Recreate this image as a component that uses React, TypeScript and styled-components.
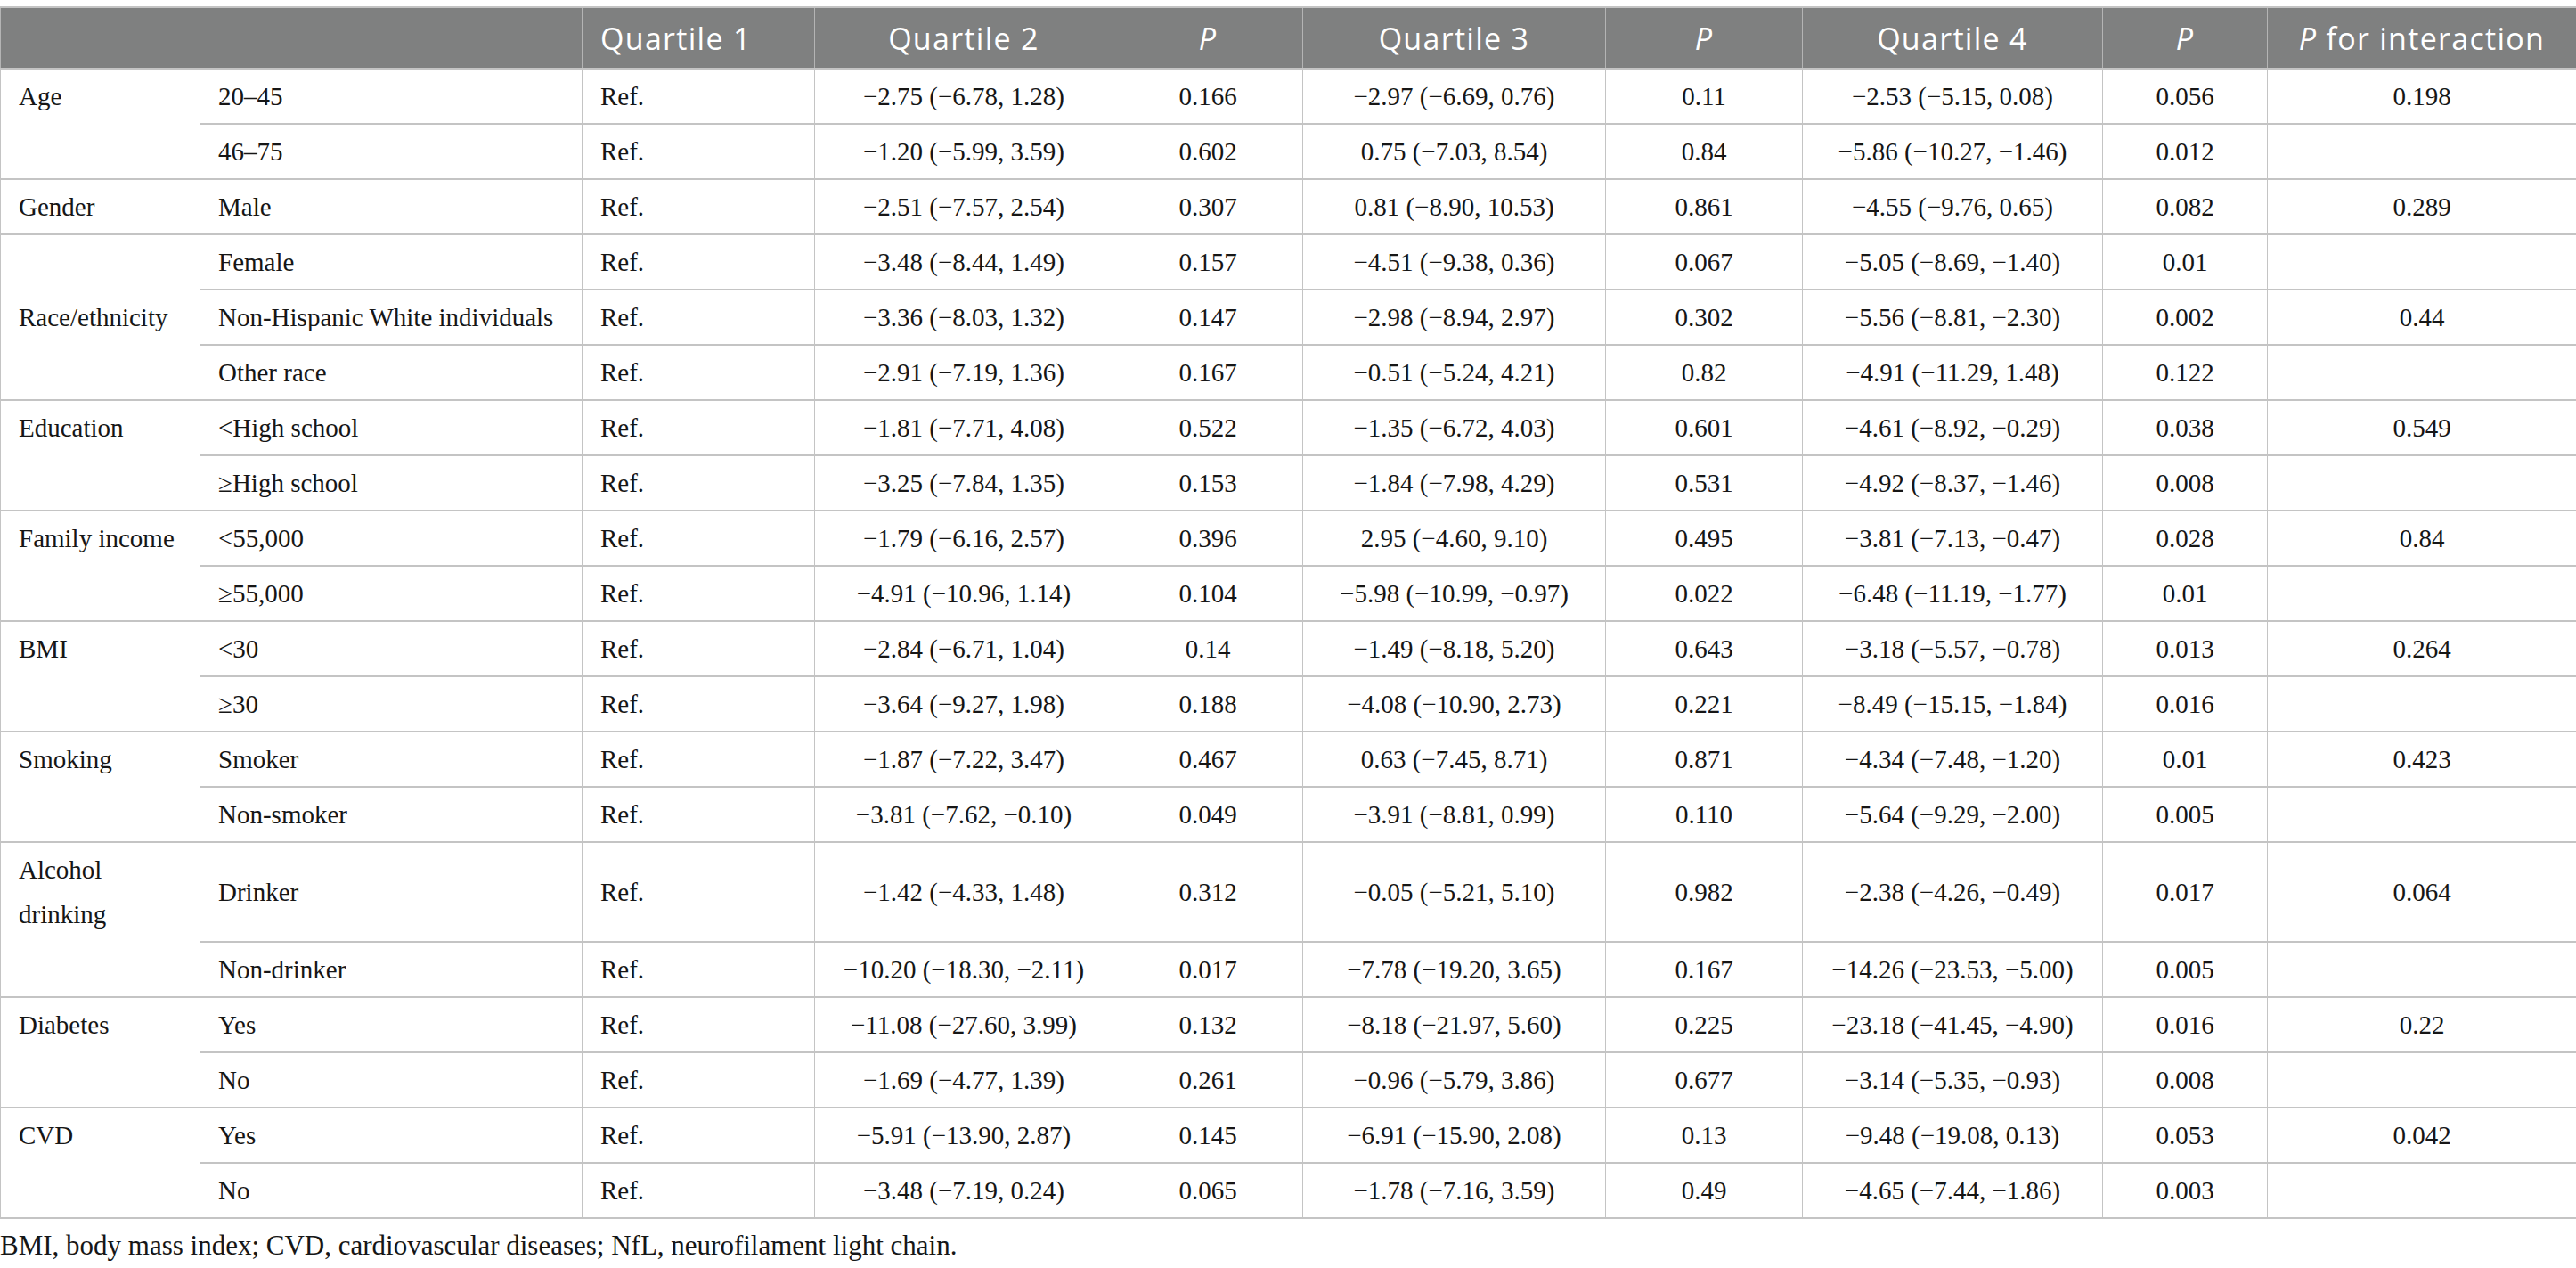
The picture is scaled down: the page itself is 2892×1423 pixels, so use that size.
import React from 'react';
import styled, { createGlobalStyle } from 'styled-components';

type DataRow = string[];

interface Group {
  label: string;
  middle?: boolean;
  tallFirst?: boolean;
  rows: DataRow[];
}

const groups: Group[] = [
  {
    label: 'Age',
    rows: [
      ['20–45', '−2.75 (−6.78, 1.28)', '0.166', '−2.97 (−6.69, 0.76)', '0.11', '−2.53 (−5.15, 0.08)', '0.056', '0.198'],
      ['46–75', '−1.20 (−5.99, 3.59)', '0.602', '0.75 (−7.03, 8.54)', '0.84', '−5.86 (−10.27, −1.46)', '0.012', ''],
    ],
  },
  {
    label: 'Gender',
    rows: [
      ['Male', '−2.51 (−7.57, 2.54)', '0.307', '0.81 (−8.90, 10.53)', '0.861', '−4.55 (−9.76, 0.65)', '0.082', '0.289'],
    ],
  },
  {
    label: 'Race/ethnicity',
    middle: true,
    rows: [
      ['Female', '−3.48 (−8.44, 1.49)', '0.157', '−4.51 (−9.38, 0.36)', '0.067', '−5.05 (−8.69, −1.40)', '0.01', ''],
      ['Non-Hispanic White individuals', '−3.36 (−8.03, 1.32)', '0.147', '−2.98 (−8.94, 2.97)', '0.302', '−5.56 (−8.81, −2.30)', '0.002', '0.44'],
      ['Other race', '−2.91 (−7.19, 1.36)', '0.167', '−0.51 (−5.24, 4.21)', '0.82', '−4.91 (−11.29, 1.48)', '0.122', ''],
    ],
  },
  {
    label: 'Education',
    rows: [
      ['<High school', '−1.81 (−7.71, 4.08)', '0.522', '−1.35 (−6.72, 4.03)', '0.601', '−4.61 (−8.92, −0.29)', '0.038', '0.549'],
      ['≥High school', '−3.25 (−7.84, 1.35)', '0.153', '−1.84 (−7.98, 4.29)', '0.531', '−4.92 (−8.37, −1.46)', '0.008', ''],
    ],
  },
  {
    label: 'Family income',
    rows: [
      ['<55,000', '−1.79 (−6.16, 2.57)', '0.396', '2.95 (−4.60, 9.10)', '0.495', '−3.81 (−7.13, −0.47)', '0.028', '0.84'],
      ['≥55,000', '−4.91 (−10.96, 1.14)', '0.104', '−5.98 (−10.99, −0.97)', '0.022', '−6.48 (−11.19, −1.77)', '0.01', ''],
    ],
  },
  {
    label: 'BMI',
    rows: [
      ['<30', '−2.84 (−6.71, 1.04)', '0.14', '−1.49 (−8.18, 5.20)', '0.643', '−3.18 (−5.57, −0.78)', '0.013', '0.264'],
      ['≥30', '−3.64 (−9.27, 1.98)', '0.188', '−4.08 (−10.90, 2.73)', '0.221', '−8.49 (−15.15, −1.84)', '0.016', ''],
    ],
  },
  {
    label: 'Smoking',
    rows: [
      ['Smoker', '−1.87 (−7.22, 3.47)', '0.467', '0.63 (−7.45, 8.71)', '0.871', '−4.34 (−7.48, −1.20)', '0.01', '0.423'],
      ['Non-smoker', '−3.81 (−7.62, −0.10)', '0.049', '−3.91 (−8.81, 0.99)', '0.110', '−5.64 (−9.29, −2.00)', '0.005', ''],
    ],
  },
  {
    label: 'Alcohol drinking',
    tallFirst: true,
    rows: [
      ['Drinker', '−1.42 (−4.33, 1.48)', '0.312', '−0.05 (−5.21, 5.10)', '0.982', '−2.38 (−4.26, −0.49)', '0.017', '0.064'],
      ['Non-drinker', '−10.20 (−18.30, −2.11)', '0.017', '−7.78 (−19.20, 3.65)', '0.167', '−14.26 (−23.53, −5.00)', '0.005', ''],
    ],
  },
  {
    label: 'Diabetes',
    rows: [
      ['Yes', '−11.08 (−27.60, 3.99)', '0.132', '−8.18 (−21.97, 5.60)', '0.225', '−23.18 (−41.45, −4.90)', '0.016', '0.22'],
      ['No', '−1.69 (−4.77, 1.39)', '0.261', '−0.96 (−5.79, 3.86)', '0.677', '−3.14 (−5.35, −0.93)', '0.008', ''],
    ],
  },
  {
    label: 'CVD',
    rows: [
      ['Yes', '−5.91 (−13.90, 2.87)', '0.145', '−6.91 (−15.90, 2.08)', '0.13', '−9.48 (−19.08, 0.13)', '0.053', '0.042'],
      ['No', '−3.48 (−7.19, 0.24)', '0.065', '−1.78 (−7.16, 3.59)', '0.49', '−4.65 (−7.44, −1.86)', '0.003', ''],
    ],
  },
];

const colWidths = [224, 429, 261, 335, 213, 340, 221, 337, 185, 347];

const App: React.FC = () => {
  return (
    <Page>
      <GlobalStyle />
      <Table>
        <colgroup>
          {colWidths.map((w, i) => (
            <col key={i} style={{ width: w }} />
          ))}
        </colgroup>
        <thead>
          <tr>
            <HeadCell />
            <HeadCell />
            <HeadCell $left>Quartile 1</HeadCell>
            <HeadCell>Quartile 2</HeadCell>
            <HeadCell><em>P</em></HeadCell>
            <HeadCell>Quartile 3</HeadCell>
            <HeadCell><em>P</em></HeadCell>
            <HeadCell>Quartile 4</HeadCell>
            <HeadCell><em>P</em></HeadCell>
            <HeadCell><em>P</em> for interaction</HeadCell>
          </tr>
        </thead>
        <tbody>
          {groups.map((group) =>
            group.rows.map((row, i) => (
              <Row key={group.label + row[0]} $tall={group.tallFirst && i === 0}>
                {i === 0 && (
                  <GroupCell rowSpan={group.rows.length} $middle={group.middle}>
                    {group.label}
                  </GroupCell>
                )}
                <TextCell>{row[0]}</TextCell>
                <TextCell>Ref.</TextCell>
                {row.slice(1).map((value, j) => (
                  <NumCell key={j}>{value}</NumCell>
                ))}
              </Row>
            ))
          )}
        </tbody>
      </Table>
      <Footnote>
        BMI, body mass index; CVD, cardiovascular diseases; NfL, neurofilament light chain.
      </Footnote>
    </Page>
  );
};

const GlobalStyle = createGlobalStyle`
  html, body {
    margin: 0;
    padding: 0;
    background: #ffffff;
  }
`;

const Page = styled.div`
  padding-top: 7px;
  width: 2892px;
  font-family: 'Liberation Serif', 'Times New Roman', serif;
  color: #161616;
`;

const Table = styled.table`
  width: 2892px;
  table-layout: fixed;
  border-collapse: collapse;
  border-top: 2px solid #c4c4c4;
  border-bottom: 2px solid #c4c4c4;
  border-left: 1px solid #c4c4c4;
  border-right: 1px solid #c4c4c4;
`;

const HeadCell = styled.th<{ $left?: boolean }>`
  background: #7f8080;
  color: #ffffff;
  font-family: 'Open Sans', 'Noto Sans', sans-serif;
  font-weight: 400;
  font-size: 34px;
  letter-spacing: 1.3px;
  line-height: 50px;
  height: 67px;
  padding: 0 20px;
  text-align: ${({ $left }) => ($left ? 'left' : 'center')};
  vertical-align: middle;
  border-left: 1px solid #b4b4b4;
  border-right: 1px solid #b4b4b4;
  white-space: nowrap;

  em {
    font-style: italic;
  }
`;

const Row = styled.tr<{ $tall?: boolean }>`
  height: ${({ $tall }) => ($tall ? '112px' : '62px')};
`;

const Cell = styled.td`
  font-size: 29px;
  line-height: 50px;
  padding: 5px 20px;
  border-top: 2px solid #c4c4c4;
  border-bottom: 2px solid #c4c4c4;
  border-left: 1px solid #c4c4c4;
  border-right: 1px solid #c4c4c4;
  white-space: nowrap;
`;

const GroupCell = styled(Cell)<{ $middle?: boolean }>`
  vertical-align: ${({ $middle }) => ($middle ? 'middle' : 'top')};
  white-space: normal;
`;

const TextCell = styled(Cell)`
  text-align: left;
  vertical-align: middle;
`;

const NumCell = styled(Cell)`
  text-align: center;
  vertical-align: middle;
`;

const Footnote = styled.p`
  margin: 5px 0 0;
  font-size: 31px;
  line-height: 50px;
  color: #161616;
`;

export default App;
